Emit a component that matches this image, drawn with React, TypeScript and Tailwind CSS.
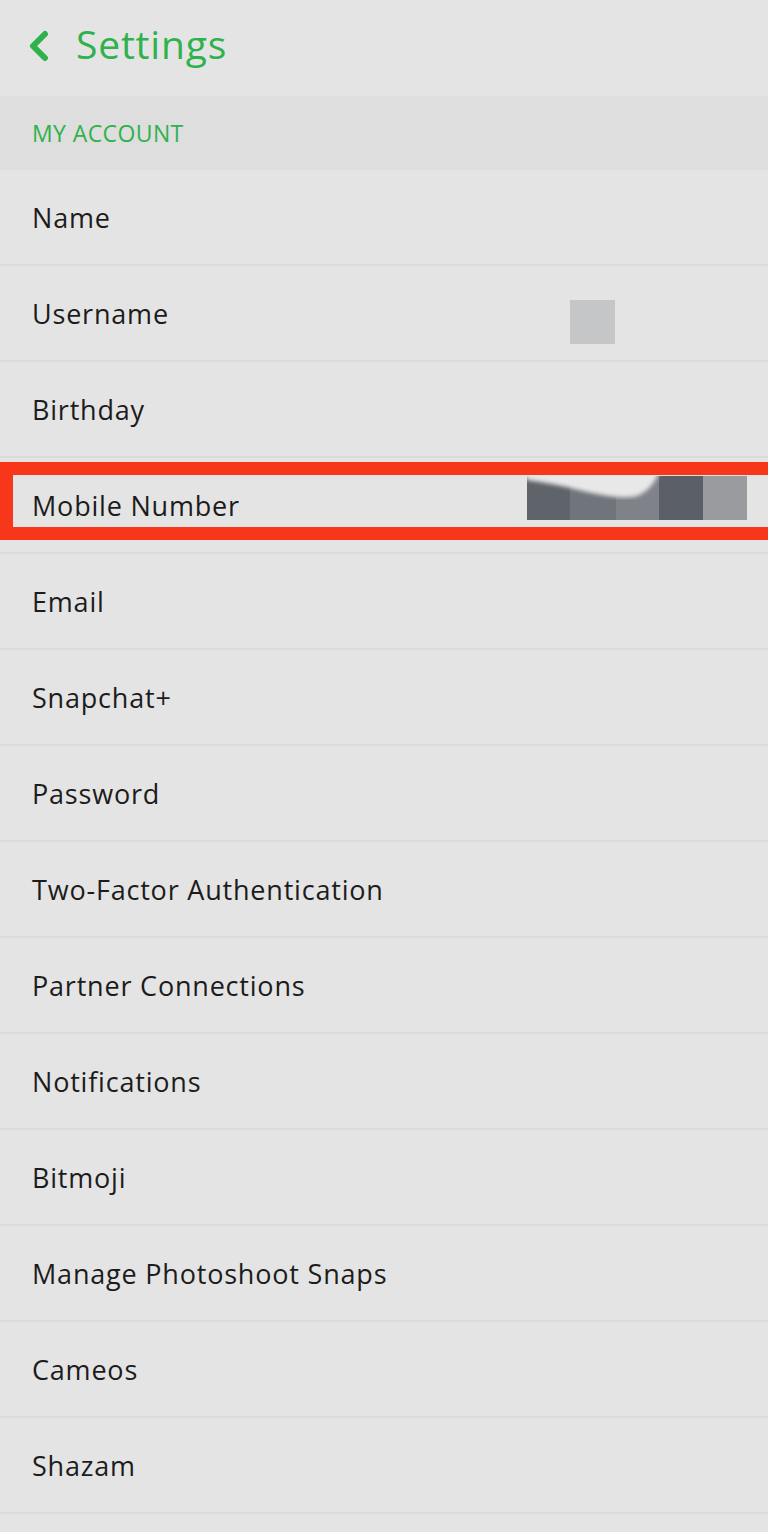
import React from "react";

const rows = [
  "Name",
  "Username",
  "Birthday",
  "Mobile Number",
  "Email",
  "Snapchat+",
  "Password",
  "Two-Factor Authentication",
  "Partner Connections",
  "Notifications",
  "Bitmoji",
  "Manage Photoshoot Snaps",
  "Cameos",
  "Shazam",
];

function MobileBlur() {
  return (
    <svg width="220" height="44" viewBox="0 0 220 44" className="block">
      <defs>
        <filter id="bl" x="-10%" y="-10%" width="120%" height="120%">
          <feGaussianBlur stdDeviation="2" />
        </filter>
      </defs>
      <rect x="0" y="0" width="43" height="44" fill="#5f646b" />
      <rect x="43" y="0" width="46" height="44" fill="#70757c" />
      <rect x="89" y="0" width="43" height="44" fill="#7f8389" />
      <rect x="132" y="0" width="44" height="44" fill="#5b6068" />
      <rect x="176" y="0" width="44" height="44" fill="#9a9b9f" />
      <path d="M-4 -4 L0 4 Q30 8 60 16 Q95 24 110 20 Q125 14 132 -4 Z" fill="#e8e8e8" filter="url(#bl)" />
    </svg>
  );
}

export default function App() {
  return (
    <div
      className="w-[768px] min-h-[1532px] bg-[#e4e4e4] overflow-hidden"
      style={{ fontFamily: "'Open Sans', 'Noto Sans', sans-serif" }}
    >
      <div className="h-[96px] flex items-center pl-[28px]">
        <svg width="22" height="32" viewBox="0 0 22 32" className="mr-[26px] mb-[4px]">
          <path d="M17 4 L5 16 L17 28" fill="none" stroke="#2fb24b" strokeWidth="6" strokeLinecap="round" strokeLinejoin="round" />
        </svg>
        <span className="text-[39px] text-[#2fb24b] leading-none mb-[10px] tracking-[0.8px]">Settings</span>
      </div>
      <div className="h-[74px] bg-[#dedede] flex items-center pl-[32px]">
        <span className="text-[23px] text-[#2fb24b] leading-none tracking-[0.4px]">MY ACCOUNT</span>
      </div>
      {rows.map((r) => (
        <div
          key={r}
          className="relative h-[96px] border-b-2 border-[#dbdbdb] flex items-center pl-[32px]"
        >
          <span className="text-[27px] text-[#1c1c1c] leading-none tracking-[0.8px]">{r}</span>
          {r === "Username" && (
            <div className="ml-auto mr-[153px] mt-[18px] w-[45px] h-[44px] bg-[#c5c6c8]" />
          )}
          {r === "Mobile Number" && (
            <>
              <div className="ml-auto mr-[21px] mb-[14px]">
                <MobileBlur />
              </div>
              <div className="absolute left-0 -right-[20px] top-[4px] h-[78px] border-[13px] border-[#f7361a]" />
            </>
          )}
        </div>
      ))}
    </div>
  );
}
